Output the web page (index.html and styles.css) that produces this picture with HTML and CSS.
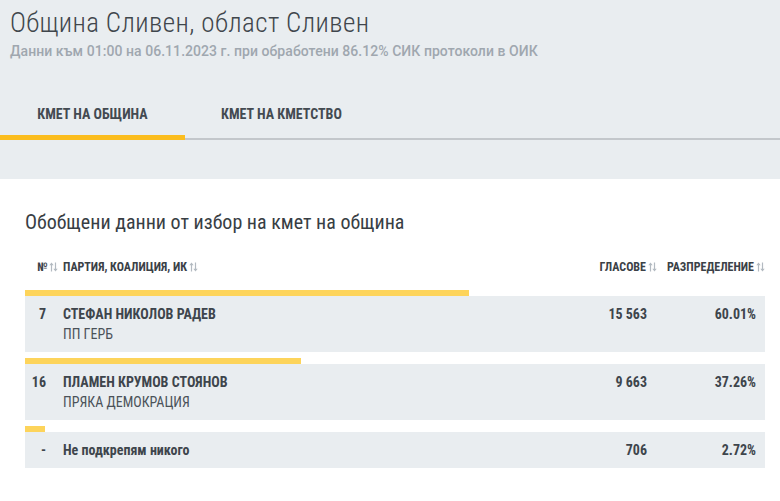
FILE: index.html
```html
<!doctype html>
<html>
  <head>
    <meta charset="utf-8">
    <title>Община Сливен, област Сливен</title>
    <link rel="stylesheet" href="styles.css">
  </head>
  <body>
    <div class="top">
      <div class="page-head">
        <h1>Община Сливен, област Сливен</h1>
        <p class="meta">Данни към 01:00 на 06.11.2023 г. при обработени 86.12% СИК протоколи в ОИК</p>
      </div>

      <nav class="tabs">
        <a class="tab active" href="#">КМЕТ НА ОБЩИНА</a>
        <a class="tab" href="#">КМЕТ НА КМЕТСТВО</a>
      </nav>
    </div>

    <div class="results">
      <h2>Обобщени данни от избор на кмет на община</h2>

      <div class="grid head">
        <span class="num">№<svg class="sort" width="9" height="10" viewBox="0 0 9 10"><path d="M2.5 9.5V2M6.5 0.5V8"/><path class="tip" d="M0.3 3.2L2.5 0.6L4.7 3.2ZM4.3 6.8L6.5 9.4L8.7 6.8Z"/></svg></span>
        <span class="name">ПАРТИЯ, КОАЛИЦИЯ, ИК<svg class="sort" width="9" height="10" viewBox="0 0 9 10"><path d="M2.5 9.5V2M6.5 0.5V8"/><path class="tip" d="M0.3 3.2L2.5 0.6L4.7 3.2ZM4.3 6.8L6.5 9.4L8.7 6.8Z"/></svg></span>
        <span class="votes">ГЛАСОВЕ<svg class="sort" width="9" height="10" viewBox="0 0 9 10"><path d="M2.5 9.5V2M6.5 0.5V8"/><path class="tip" d="M0.3 3.2L2.5 0.6L4.7 3.2ZM4.3 6.8L6.5 9.4L8.7 6.8Z"/></svg></span>
        <span class="pct">РАЗПРЕДЕЛЕНИЕ<svg class="sort" width="9" height="10" viewBox="0 0 9 10"><path d="M2.5 9.5V2M6.5 0.5V8"/><path class="tip" d="M0.3 3.2L2.5 0.6L4.7 3.2ZM4.3 6.8L6.5 9.4L8.7 6.8Z"/></svg></span>
      </div>

      <div class="row">
        <div class="bar" style="width: 60.01%"></div>
        <div class="grid cells">
          <span class="num">7</span>
          <div class="name"><b>СТЕФАН НИКОЛОВ РАДЕВ</b><span>ПП ГЕРБ</span></div>
          <span class="votes">15 563</span>
          <span class="pct">60.01%</span>
        </div>
      </div>

      <div class="row">
        <div class="bar" style="width: 37.26%"></div>
        <div class="grid cells">
          <span class="num">16</span>
          <div class="name"><b>ПЛАМЕН КРУМОВ СТОЯНОВ</b><span>ПРЯКА ДЕМОКРАЦИЯ</span></div>
          <span class="votes">9 663</span>
          <span class="pct">37.26%</span>
        </div>
      </div>

      <div class="row">
        <div class="bar" style="width: 2.72%"></div>
        <div class="grid cells">
          <span class="num">-</span>
          <div class="name"><b>Не подкрепям никого</b></div>
          <span class="votes">706</span>
          <span class="pct">2.72%</span>
        </div>
      </div>
    </div>
  </body>
</html>
```

FILE: styles.css
```css
/* Общи */
body {
  margin: 0;
  padding: 0;
  background-color: #fff;
  font-family: "Roboto Condensed", Roboto, sans-serif;
  font-stretch: condensed;
  color: #3e454c;
}

/* Горна сива част */
.top {
  background-color: #e9edf0;
  padding-bottom: 39px;
}

.page-head {
  padding: 8px 10px 0;
}

.page-head h1 {
  margin: 0;
  font-size: 27px;
  line-height: 30px;
  font-weight: 300;
  letter-spacing: 0.4px;
  color: #40464c;
}

.page-head .meta {
  margin: 3px 0 0;
  font-family: Roboto, sans-serif;
  font-stretch: normal;
  font-size: 14px;
  line-height: 20px;
  font-weight: 500;
  letter-spacing: 0.05px;
  color: #9fa7af;
}

/* Табове */
.tabs {
  display: flex;
  margin-top: 45px;
  border-bottom: 2px solid #c3c7cb;
}

.tab {
  display: block;
  width: 185px;
  box-sizing: border-box;
  padding: 0 0 13px;
  margin-bottom: -2px;
  border-bottom: 5px solid transparent;
  text-align: center;
  text-decoration: none;
  font-size: 14px;
  line-height: 16px;
  font-weight: 700;
  color: #434a51;
}

.tab + .tab {
  width: 193px;
}

.tab.active {
  border-bottom-color: #fbbd1e;
}

/* Резултати */
.results {
  padding: 31px 15px 30px 25px;
}

.results h2 {
  margin: 0 0 25px;
  font-size: 20px;
  line-height: 24px;
  font-weight: 400;
  color: #383e44;
}

.grid {
  display: grid;
  grid-template-columns: 30px 1fr 102px 108px;
}

.head {
  padding-bottom: 15px;
  font-size: 12px;
  line-height: 16px;
  font-weight: 700;
  color: #3b4147;
  white-space: nowrap;
}

.head .num {
  padding-left: 12px;
}

.head .name {
  padding-left: 8px;
}

.head .votes,
.head .pct {
  text-align: right;
}

.sort {
  margin-left: 2px;
  vertical-align: -1px;
}

.sort path {
  stroke: #b3bac1;
  stroke-width: 1.2;
  fill: none;
}

.sort path.tip {
  stroke: none;
  fill: #b3bac1;
}

.row + .row {
  margin-top: 6px;
}

.bar {
  height: 6px;
  background-color: #fdd45b;
}

.cells {
  padding: 8px 0;
  background-color: #e9edf0;
  font-size: 14px;
  line-height: 20px;
  color: #3e454c;
}

.cells .num {
  padding-right: 9px;
  text-align: right;
  font-weight: 700;
}

.cells .name {
  padding-left: 8px;
  display: flex;
  flex-direction: column;
}

.cells .name b {
  font-weight: 700;
}

.cells .name span {
  font-weight: 400;
  color: #4b5259;
}

.cells .votes {
  padding-right: 10px;
  text-align: right;
  font-weight: 700;
}

.cells .pct {
  padding-right: 9px;
  text-align: right;
  font-weight: 700;
}
```
